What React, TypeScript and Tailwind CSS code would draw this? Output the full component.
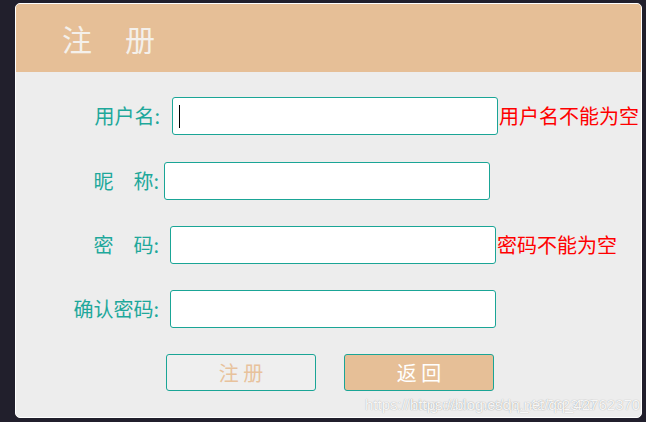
import React from "react";

const FONT = { fontFamily: '"Noto Sans CJK SC", "Liberation Sans", sans-serif' };

interface RowProps {
  label: string;
  labelWidth: string;
  inputGap: string;
  top: string;
  error?: string;
  caret?: boolean;
}

const FormRow = ({ label, labelWidth, inputGap, top, error, caret }: RowProps) => (
  <div className={`flex items-center ${top}`}>
    <span className={`${labelWidth} text-right text-[20px] leading-none text-[#1ea89b] whitespace-pre`}>
      {label}
    </span>
    <div className={`relative ${inputGap}`}>
      <input
        type="text"
        className="block w-[326px] h-[38px] bg-white border border-[#1aa596] rounded-[3px] outline-none px-2"
      />
      {caret && <span className="absolute left-[7px] top-[8px] w-px h-[23px] bg-black" />}
    </div>
    {error && <span className="ml-px text-[20px] leading-none text-[#ff0000] whitespace-nowrap">{error}</span>}
  </div>
);

const WM_STYLE = {
  fontFamily: '"Liberation Sans", sans-serif',
  textShadow: "0 0 1px rgba(0,0,0,0.35)",
};

const App = () => {
  return (
    <div className="w-[646px] h-[422px] bg-[#211f2c] pt-[3px] pl-[15px]" style={FONT}>
      <div className="relative w-[627px] h-[415px] bg-[#ededed] border border-white rounded-[5px] overflow-hidden">
        <div className="h-[68px] bg-[#e6bf97] flex items-center pl-[46px]">
          <span className="text-[30px] leading-none text-[#f4f0eb]">注</span>
          <span className="text-[30px] leading-none text-[#f4f0eb] ml-[33px]">册</span>
        </div>

        <div className="flex flex-col">
          <FormRow label="用户名:" labelWidth="w-[144px]" inputGap="ml-[12px]" top="mt-[25px]" error="用户名不能为空" caret />
          <FormRow label="昵　称:" labelWidth="w-[143px]" inputGap="ml-[5px]" top="mt-[27px]" />
          <FormRow label="密　码:" labelWidth="w-[143px]" inputGap="ml-[11px]" top="mt-[26px]" error="密码不能为空" />
          <FormRow label="确认密码:" labelWidth="w-[143px]" inputGap="ml-[11px]" top="mt-[26px]" />

          <div className="flex mt-[26px] pl-[150px] gap-[28px]">
            <button className="w-[150px] h-[37px] bg-[#efefef] border border-[#1aa596] rounded-[3px] text-[20px] leading-none text-[#e8c29c]">
              注 册
            </button>
            <button className="w-[150px] h-[37px] bg-[#e6bf97] border border-[#1aa596] rounded-[3px] text-[20px] leading-none text-white">
              返 回
            </button>
          </div>
        </div>

        <span className="absolute left-[349px] top-[393px] text-[15px] leading-none text-white/90 whitespace-nowrap" style={WM_STYLE}>
          https://blog.csdn.net/qq_42762370
        </span>
        <span className="absolute left-[394px] top-[393px] text-[15px] leading-none text-white/90 whitespace-nowrap" style={WM_STYLE}>
          https://blog.csdn.net/qq_42762370
        </span>
      </div>
    </div>
  );
};

export default App;
